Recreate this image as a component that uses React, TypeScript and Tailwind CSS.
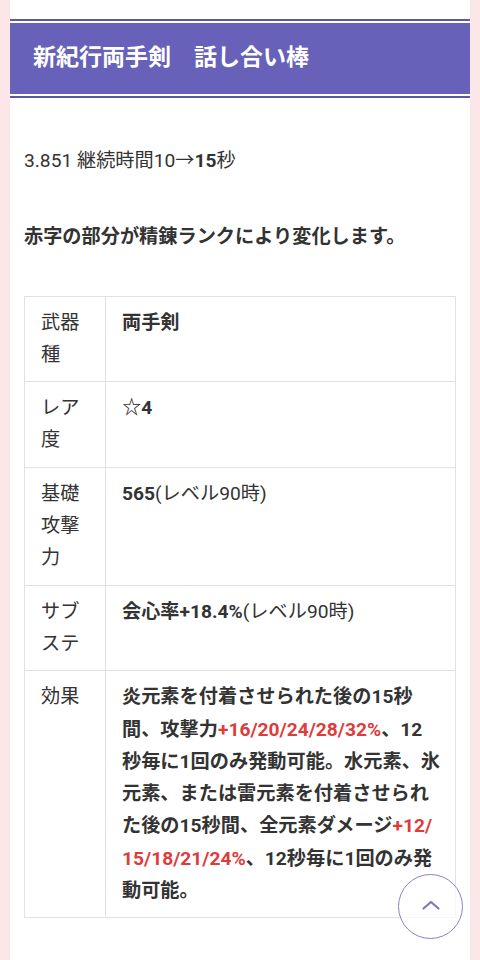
import React from "react";

const F = { fontFamily: 'Roboto, "Noto Sans CJK JP", sans-serif' };

function Row({ label, children }: { label: string; children: React.ReactNode }) {
  return (
    <tr>
      <td className="border border-[#e2e2e2] px-[16px] py-[10px] align-top font-normal text-[#333]">
        {label}
      </td>
      <td className="border border-[#e2e2e2] py-[10px] pl-[16px] pr-[12px] align-top text-[#333]">{children}</td>
    </tr>
  );
}

export default function App() {
  return (
    <div className="min-h-[960px] bg-[#fde6e8] px-[10px]" style={F}>
      <div className="min-h-[960px] bg-white pt-[19px] text-[19.2px] leading-[32.3px] text-[#333]">
        <div className="border-y-2 border-[#5c57a9] bg-white py-[2px]">
          <div className="flex h-[71px] items-center bg-[#6761b9] pl-[23px] text-[23px] font-bold text-white">
            新紀行両手剣　話し合い棒
          </div>
        </div>
        <div className="px-[14px]">
          <p className="mt-[47px]">
            3.851 継続時間10→<span className="font-bold">15</span>秒
          </p>
          <p className="mt-[44px] font-bold">赤字の部分が精錬ランクにより変化します。</p>
          <table className="mt-[42px] w-full table-fixed border-collapse">
            <colgroup>
              <col className="w-[81px]" />
              <col />
            </colgroup>
            <tbody>
              <Row label="武器種">
                <span className="font-bold">両手剣</span>
              </Row>
              <Row label="レア度">
                <span className="font-bold">☆4</span>
              </Row>
              <Row label="基礎攻撃力">
                <span className="font-bold">565</span>(レベル90時)
              </Row>
              <Row label="サブステ">
                <span className="font-bold">会心率+18.4%</span>(レベル90時)
              </Row>
              <Row label="効果">
                <span className="font-bold">
                  炎元素を付着させられた後の15秒
                  <br />
                  間、攻撃力<span className="text-[#df3b3b]">+16/20/24/28/32%</span>、12
                  <br />
                  秒毎に1回のみ発動可能。水元素、氷
                  <br />
                  元素、または雷元素を付着させられ
                  <br />
                  た後の15秒間、全元素ダメージ<span className="text-[#df3b3b]">+12/</span>
                  <br />
                  <span className="text-[#df3b3b]">15/18/21/24%</span>、12秒毎に1回のみ発
                  <br />
                  動可能。
                </span>
              </Row>
            </tbody>
          </table>
        </div>
      </div>
      <button className="fixed bottom-[21px] right-[17px] flex h-[65px] w-[65px] items-center justify-center rounded-full border-[1.5px] border-[#8882c8] bg-white/70">
        <svg width="18" height="10" viewBox="0 0 18 10" className="mb-[3px]">
          <polyline points="1.5,8.5 9,2 16.5,8.5" fill="none" stroke="#7d77c2" strokeWidth="2.2" strokeLinecap="round" strokeLinejoin="round" />
        </svg>
      </button>
    </div>
  );
}
